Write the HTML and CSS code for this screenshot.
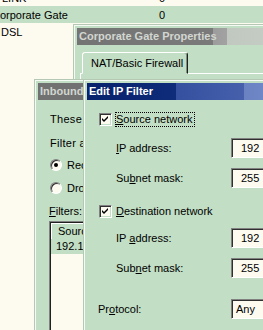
FILE: index.html
```html
<!DOCTYPE html>
<html lang="en">
<head>
    <meta charset="UTF-8">
    <meta name="viewport" content="width=device-width, initial-scale=1.0">
    <title>Edit IP Filter</title>
    <link rel="stylesheet" href="styles.css">
</head>
<body>
    <!-- connection list behind the dialogs -->
    <div class="connections">
        <div class="conn-row"><span class="conn-name name-link">LINK</span><span class="conn-count">0</span></div>
        <div class="conn-row selected"><span class="conn-name name-cut">Corporate Gate</span><span class="conn-count">0</span></div>
        <div class="conn-row"><span class="conn-name">DSL</span><span class="conn-count"></span></div>
    </div>

    <div class="window props">
        <div class="titlebar inactive props-title">Corporate Gate Properties</div>
        <div class="tabs">
            <div class="tab">NAT/Basic Firewall</div>
        </div>
        <div class="tab-page"></div>
    </div>

    <div class="window inbound">
        <div class="titlebar inactive inbound-title">Inbound Filters</div>
        <div class="inbound-body">
            <p class="line line-first">These filters control which packets are forwarded to this network.</p>
            <p class="line line-action">Filter action:</p>
            <div class="radio-row radio-first"><span class="radio checked"></span><span>Receive all packets except those that meet the criteria below</span></div>
            <div class="radio-row"><span class="radio"></span><span>Drop all packets except those that meet the criteria below</span></div>
            <p class="line line-filters"><u>F</u>ilters:</p>
            <div class="listbox">
                <div class="list-header">Source Address</div>
                <div class="list-item">192.168.0.0</div>
            </div>
        </div>
    </div>

    <div class="window edit">
        <div class="titlebar active">Edit IP Filter</div>
        <div class="edit-body">
            <div class="check-row">
                <span class="checkbox">
                    <svg width="7" height="7" viewBox="0 0 7 7"><path d="M0 2 L2 4 L6 0 L6 2 L2 6 L0 4 Z" fill="#000"/></svg>
                </span>
                <span class="focus"><u>S</u>ource network</span>
            </div>
            <div class="field field-ip1"><label><u>I</u>P address:</label><span class="input">192</span></div>
            <div class="field field-mask1"><label>Su<u>b</u>net mask:</label><span class="input">255</span></div>
            <div class="check-row check-dest">
                <span class="checkbox">
                    <svg width="7" height="7" viewBox="0 0 7 7"><path d="M0 2 L2 4 L6 0 L6 2 L2 6 L0 4 Z" fill="#000"/></svg>
                </span>
                <span><u>D</u>estination network</span>
            </div>
            <div class="field field-ip2"><label>IP <u>a</u>ddress:</label><span class="input">192</span></div>
            <div class="field field-mask2"><label>Sub<u>n</u>et mask:</label><span class="input">255</span></div>
            <div class="field field-proto"><label>Pr<u>o</u>tocol:</label><span class="input select">Any</span></div>
        </div>
    </div>
</body>
</html>
```

FILE: styles.css
```css
body {
    margin: 0;
    width: 263px;
    height: 330px;
    overflow: hidden;
    position: relative;
    background: #fdfaf0;
    font-family: "Liberation Sans", Arial, sans-serif;
    font-size: 11px;
    color: #000;
}

p {
    margin: 0;
}

/* background list */
.connections {
    margin-top: -11px;
}

.conn-row {
    display: flex;
    align-items: center;
    height: 17px;
    white-space: nowrap;
}

.conn-row.selected {
    background: #c2dec4;
}

.conn-name {
    width: 159px;
    padding-left: 1px;
    box-sizing: border-box;
}

.name-link {
    padding-left: 2px;
}

.name-cut {
    text-indent: -9px;
}

.conn-count {
    flex: 1;
}

/* windows */
.window {
    position: absolute;
    box-sizing: border-box;
    background: #c2dec4;
    border: 1px solid;
    border-color: #b4c8b4 #404040 #404040 #b4c8b4;
    box-shadow: inset 1px 1px #f4fbf4;
    padding: 3px;
}

.props {
    left: 73px;
    top: 24px;
    width: 220px;
    height: 320px;
}

.inbound {
    left: 34px;
    top: 79px;
    width: 240px;
    height: 280px;
}

.edit {
    left: 83px;
    top: 79px;
    width: 220px;
    height: 280px;
}

.titlebar {
    height: 17px;
    line-height: 17px;
    padding-left: 2px;
    font-weight: bold;
    white-space: nowrap;
    overflow: hidden;
}

.titlebar.inactive {
    color: #d2d6d0;
}

.props-title {
    background: linear-gradient(to right, #747474 0, #7a7a7a 136px, #9c9c9c 136px, #a2a2a2 150px, #c0c8c0 150px, #c6cec6 100%);
}

.inbound-title {
    background: #717171;
}

.titlebar.active {
    color: #fff;
    background: linear-gradient(to right, #08226c 0, #0e2c7a 89px, #34509e 89px, #4660ac 157px, #6a82c2 157px, #7890cc 100%);
}

/* tabs */
.tabs {
    display: flex;
    margin-top: 7px;
    padding-left: 5px;
    position: relative;
    z-index: 1;
}

.tab {
    width: 106px;
    height: 22px;
    line-height: 21px;
    box-sizing: border-box;
    padding-left: 8px;
    border: 1px solid;
    border-color: #fff #202020 transparent #fff;
    border-radius: 3px 3px 0 0;
    box-shadow: inset -1px 0 #7c907c;
    background: #c2dec4;
    margin-bottom: -1px;
    white-space: nowrap;
}

.tab-page {
    margin-left: 3px;
    height: 200px;
    border-top: 1px solid #fff;
    border-left: 1px solid #fff;
}

/* inbound filters dialog */
.inbound-body {
    padding-left: 12px;
    white-space: nowrap;
}

.line {
    height: 14px;
    line-height: 14px;
}

.line-first {
    margin-top: 12px;
    letter-spacing: 0.3px;
}

.line-action {
    margin-top: 10px;
    letter-spacing: 0.3px;
}

.line-filters {
    margin-top: 9px;
    margin-left: -1px;
}

.radio-row {
    display: flex;
    align-items: center;
    gap: 5px;
    height: 14px;
    margin-top: 9px;
}

.radio-first {
    margin-top: 8px;
}

.radio {
    flex-shrink: 0;
    width: 12px;
    height: 12px;
    box-sizing: border-box;
    border-radius: 50%;
    border: 1px solid;
    border-color: #808080 #fff #fff #808080;
    box-shadow: inset 1px 1px #303030;
    background: #fdfaf0;
    display: flex;
    align-items: center;
    justify-content: center;
}

.radio.checked::after {
    content: "";
    width: 4px;
    height: 4px;
    border-radius: 50%;
    background: #000;
}

.listbox {
    margin-top: 3px;
    margin-left: -1px;
    height: 120px;
    background: #fdfaf0;
    border-left: 1px solid #808080;
    border-top: 1px solid #808080;
    box-shadow: inset 1px 1px #202020;
    padding: 1px 0 0 1px;
}

.list-header {
    height: 16px;
    line-height: 15px;
    padding-left: 6px;
    background: #c2dec4;
    border-top: 1px solid #fff;
    border-left: 1px solid #fff;
    box-sizing: border-box;
}

.list-item {
    height: 15px;
    line-height: 15px;
    padding-left: 5px;
    background: #c2dec4;
}

/* edit ip filter dialog */
.edit-body {
    white-space: nowrap;
}

.check-row {
    display: flex;
    align-items: center;
    gap: 4px;
    height: 20px;
    margin-top: 9px;
    padding-left: 12px;
}

.check-dest {
    margin-top: 13px;
}

.checkbox {
    flex-shrink: 0;
    width: 13px;
    height: 13px;
    box-sizing: border-box;
    border: 1px solid;
    border-color: #808080 #fff #fff #808080;
    box-shadow: inset 1px 1px #303030, inset -1px -1px #c2dec4;
    background: #fdfaf0;
    display: flex;
    align-items: center;
    justify-content: center;
}

.focus {
    outline: 1px dotted #000;
    outline-offset: 0;
    padding: 0 2px 0 0;
    line-height: 13px;
}

.field {
    display: flex;
    align-items: center;
    height: 20px;
    padding-left: 29px;
    margin-top: 10px;
}

.field label {
    flex-shrink: 0;
    width: 115px;
}

.field-ip1 {
    margin-top: 9px;
}

.field-ip2 {
    margin-top: 7px;
}

.field-proto {
    padding-left: 11px;
    margin-top: 21px;
}

.field-proto label {
    width: 133px;
}

.input {
    flex-shrink: 0;
    width: 60px;
    height: 20px;
    line-height: 18px;
    box-sizing: border-box;
    padding-left: 9px;
    background: #fdfaf0;
    border: 1px solid;
    border-color: #808080 #fff #fff #808080;
    box-shadow: inset 1px 1px #303030;
}

.input.select {
    padding-left: 4px;
}
```
